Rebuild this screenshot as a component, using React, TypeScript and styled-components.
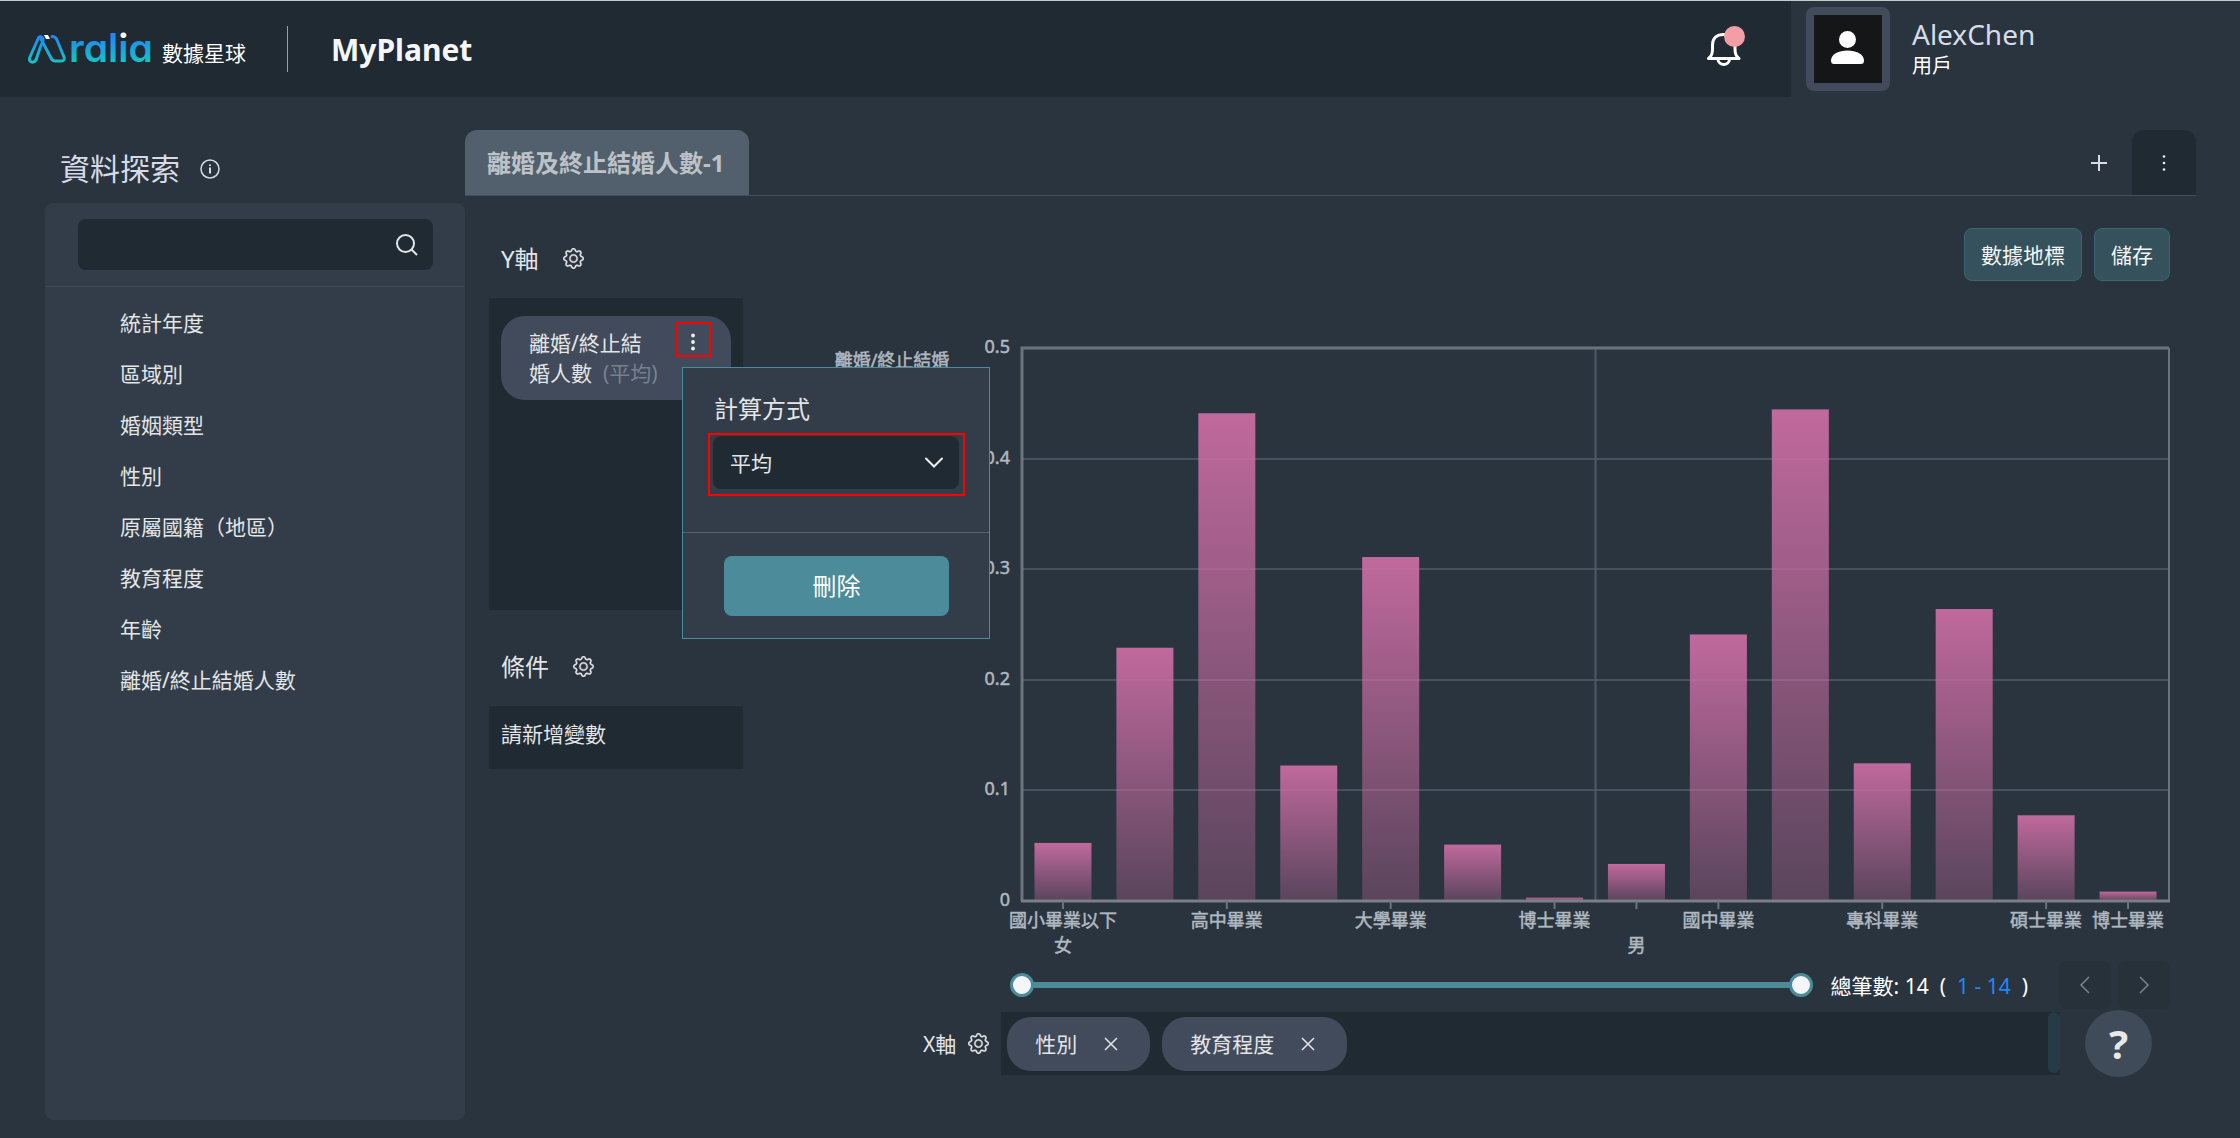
import React, { useState } from "react";
import styled, { createGlobalStyle } from "styled-components";
import { BsGear } from "react-icons/bs";

const color = {
  page: "#2a343e",
  deep: "#202a33",
  panel: "#323d49",
  chip: "#414b5c",
  line: "#434f5f",
  teal: "#4c8c9a",
  text: "#e3e5e7",
  soft: "#d7dbe8",
  mark: "#ff0000",
};

const GlobalStyle = createGlobalStyle`
  *, *::before, *::after { box-sizing: border-box; }
  body {
    margin: 0;
    background: ${color.page};
    color: ${color.text};
    font-family: "Noto Sans", "Noto Sans CJK TC", sans-serif;
    font-size: 21px;
    line-height: 30px;
  }
  button, input, select {
    font: inherit;
    color: inherit;
  }
  button { cursor: pointer; padding: 0; border: 0; background: none; }
  svg { display: block; }
`;

const Page = styled.div`
  min-height: 100vh;
  display: flex;
  flex-direction: column;
  border-top: 1px solid #c3cac9;
`;

/* header */

const Header = styled.header`
  display: flex;
  height: 96px;
`;

const Brand = styled.div`
  flex: 1;
  display: flex;
  align-items: center;
  padding: 0 43px 0 28px;
  background: ${color.deep};
`;

const BrandName = styled.span`
  margin-left: 6px;
  padding-top: 8px;
  color: #fff;
`;

const Divider = styled.span`
  width: 1px;
  height: 46px;
  margin: 0 43px 0 41px;
  background: #98a0a6;
`;

const PageTitle = styled.h1`
  flex: 1;
  margin: 0;
  padding-top: 2px;
  font-size: 30px;
  line-height: 40px;
  font-weight: 700;
  color: #f5f6fa;
`;

const BellButton = styled.button`
  display: block;
`;

const User = styled.div`
  width: 449px;
  display: flex;
  align-items: center;
  gap: 22px;
  padding-left: 15px;
`;

const Avatar = styled.div`
  width: 84px;
  height: 84px;
  border: 8px solid ${color.chip};
  border-radius: 8px;
  background: #141618;
`;

const UserName = styled.div`
  font-size: 28px;
  line-height: 34px;
  color: ${color.soft};
`;

const UserRole = styled.div`
  font-size: 20px;
  color: #fff;
`;

/* page body */

const Body = styled.div`
  flex: 1;
  display: flex;
  padding: 33px 44px 18px 45px;
`;

const Sidebar = styled.aside`
  width: 420px;
  flex: none;
  display: flex;
  flex-direction: column;
`;

const SidebarHead = styled.div`
  display: flex;
  align-items: center;
  gap: 20px;
  height: 73px;
  padding: 5px 0 0 15px;
`;

const SidebarTitle = styled.h2`
  margin: 0;
  font-size: 30px;
  line-height: 40px;
  font-weight: 400;
  color: ${color.soft};
`;

const SidebarPanel = styled.div`
  flex: 1;
  border: 1px solid ${color.panel};
  border-radius: 8px;
  background: ${color.panel};
`;

const SearchArea = styled.label`
  display: grid;
  align-items: center;
  padding: 15px 31px 16px 32px;
  border-bottom: 1px solid #3e495b;
  > * { grid-area: 1 / 1; }
  > svg { justify-self: end; margin-right: 15px; }
`;

const SearchInput = styled.input`
  width: 100%;
  height: 51px;
  padding: 0 50px 0 16px;
  border: 0;
  border-radius: 8px;
  background: ${color.deep};
  outline: none;
`;

const FieldList = styled.ul`
  margin: 0;
  padding: 11px 0 0 74px;
  list-style: none;
`;

const Field = styled.li`
  line-height: 51px;
`;

const Main = styled.main`
  flex: 1;
  min-width: 0;
`;

const TabBar = styled.div`
  display: flex;
  align-items: center;
  height: 66px;
  border-bottom: 1px solid ${color.line};
`;

const Tab = styled.button`
  height: 65px;
  padding: 0 25px 0 22px;
  border-radius: 12px 12px 0 0;
  background: #52606d;
  color: #bcc2c8;
  font-size: 24px;
  font-weight: 700;
`;

const AddTab = styled.button`
  margin: 0 17px 0 auto;
  padding: 8px;
`;

const TabMenu = styled.button`
  display: grid;
  place-items: center;
  width: 64px;
  height: 65px;
  border-radius: 12px 12px 0 0;
  background: ${color.deep};
`;

const Workspace = styled.div`
  display: flex;
  gap: 80px;
  padding: 32px 26px 0 24px;
`;

/* variable slots */

const Slots = styled.div`
  width: 254px;
  flex: none;
`;

const SlotTitle = styled.h3`
  display: flex;
  align-items: center;
  gap: 24px;
  height: 70px;
  margin: 0;
  padding: 0 0 9px 12px;
  font-size: 24px;
  font-weight: 400;
`;

const Gear = styled(BsGear)`
  stroke: currentColor;
  stroke-width: 0.3px;
`;

const YSlot = styled.div`
  position: relative;
  height: 312px;
  margin-bottom: 26px;
  padding: 18px 12px;
  background: ${color.deep};
`;

const Measure = styled.div`
  display: flex;
  align-items: flex-start;
  justify-content: space-between;
  height: 84px;
  padding: 6px 20px 0 28px;
  border-radius: 24px;
  background: ${color.chip};
`;

const MeasureName = styled.div`
  width: 134px;
  padding-top: 6px;
  font-size: 21px;
  white-space: nowrap;
`;

const Muted = styled.span`
  margin-left: 11px;
  color: #75818f;
`;

const MenuButton = styled.button`
  display: grid;
  place-items: center;
  width: 35px;
  height: 35px;
  padding: 5px 2px 0 0;
  border: 2px solid ${color.mark};
`;

const EmptySlot = styled.div`
  height: 63px;
  padding: 13px 12px 0;
  background: ${color.deep};
`;

const Popup = styled.div`
  position: absolute;
  top: 69px;
  left: 193px;
  width: 308px;
  z-index: 2;
  border: 1px solid ${color.teal};
  background: ${color.panel};
`;

const PopupTop = styled.div`
  padding: 26px 24px 36px 25px;
  border-bottom: 1px solid #56626e;
`;

const PopupLabel = styled.label`
  display: block;
  padding: 0 6px 9px;
  font-size: 24px;
`;

const SelectFrame = styled.div`
  display: grid;
  align-items: center;
  height: 63px;
  padding: 1px 4px 5px 3px;
  border: 2px solid ${color.mark};
  > * { grid-area: 1 / 1; }
  > svg { justify-self: end; margin-right: 16px; pointer-events: none; }
`;

const Select = styled.select`
  appearance: none;
  width: 100%;
  height: 53px;
  padding: 0 17px;
  border: 0;
  border-radius: 8px;
  background: ${color.deep};
`;

const PopupBottom = styled.div`
  padding: 23px 40px 22px 41px;
`;

const DeleteButton = styled.button`
  width: 100%;
  height: 60px;
  border-radius: 8px;
  background: ${color.teal};
  color: #fff;
  font-size: 24px;
`;

/* chart side */

const ChartSide = styled.div`
  flex: 1;
  min-width: 0;
`;

const Actions = styled.div`
  display: flex;
  justify-content: flex-end;
  gap: 12px;
`;

const ActionButton = styled.button`
  height: 53px;
  padding: 0 16px;
  border: 1px solid #396672;
  border-radius: 8px;
  background: #35515c;
  color: #f3f5f6;
`;

const Chart = styled.svg`
  width: 100%;
  margin-top: 40px;
  text {
    font-size: 18px;
    fill: #b0b8c0;
    stroke: #b0b8c0;
    stroke-width: 0.5px;
  }
`;

const RangeRow = styled.div`
  display: flex;
  align-items: center;
  height: 48px;
  padding-left: 187px;
`;

const Range = styled.div`
  flex: 1;
  display: grid;
  align-items: center;
  height: 24px;
  background: linear-gradient(${color.teal}, ${color.teal}) center / calc(100% - 24px) 6px no-repeat;
`;

const RangeInput = styled.input`
  grid-area: 1 / 1;
  appearance: none;
  width: 100%;
  height: 24px;
  margin: 0;
  background: none;
  pointer-events: none;
  &::-webkit-slider-thumb {
    appearance: none;
    width: 24px;
    height: 24px;
    border: 3px solid ${color.teal};
    border-radius: 50%;
    background: #f5f6fa;
    pointer-events: auto;
  }
`;

const Total = styled.div`
  margin: 2px 31px 0 18px;
  color: #fff;
  white-space: pre;
`;

const TotalRange = styled.span`
  margin: 0 11px;
  color: #1f86ff;
`;

const Pager = styled.div`
  display: flex;
  gap: 7px;
`;

const PagerButton = styled.button`
  display: grid;
  place-items: center;
  width: 52px;
  height: 48px;
  border-radius: 8px;
  background: #27313a;
`;

const XRow = styled.div`
  display: flex;
  align-items: center;
  padding: 1px 18px 0 100px;
`;

const XLabel = styled.span`
  margin-right: 12px;
`;

const XSlot = styled.div`
  flex: 1;
  display: flex;
  align-items: center;
  gap: 12px;
  height: 63px;
  margin-left: 12px;
  padding-left: 6px;
  background: ${color.deep};
`;

const Chip = styled.span`
  display: flex;
  align-items: center;
  gap: 23px;
  height: 54px;
  padding: 0 28px;
  border-radius: 24px;
  background: ${color.chip};
`;

const ChipRemove = styled.button`
  padding: 4px;
`;

const ScrollThumb = styled.span`
  align-self: flex-start;
  width: 12px;
  height: 61px;
  margin-left: auto;
  border-radius: 6px;
  background: #263b46;
`;

const HelpButton = styled.button`
  width: 67px;
  height: 67px;
  margin-left: 25px;
  border-radius: 50%;
  background: #3f4b59;
  color: #e8e8e8;
  font-size: 40px;
  line-height: 67px;
  font-weight: 700;
`;

/* icons */

const Logo = () => (
  <svg width="128" height="64" viewBox="0 -10 128 64" role="img" aria-label="Aralia">
    <defs>
      <linearGradient id="brand" gradientUnits="userSpaceOnUse" x1="0" y1="8" x2="0" y2="36">
        <stop offset="0" stopColor="#2186f0" />
        <stop offset="1" stopColor="#17c3c4" />
      </linearGradient>
      <linearGradient id="brandDot" gradientUnits="userSpaceOnUse" x1="0" y1="8" x2="0" y2="36">
        <stop offset="0.16" stopColor="#fff" />
        <stop offset="0.16" stopColor="#1f90e9" />
        <stop offset="1" stopColor="#17c3c4" />
      </linearGradient>
    </defs>
    <g fill="none" stroke="url(#brand)" strokeWidth="3" strokeLinecap="round" strokeLinejoin="round">
      <path d="M15 12C14 9 11 9 10 12L2 30C0 35 5 37 8 33L12 21L15 14" />
      <path d="M12 10L23 31C24 33 25 34 27 34H33C36 34 37 32 36 30L29 13C28 10 26 9.500 24 9.500" />
    </g>
    <path d="M16 8h4l2 4h-4z" fill="#fff" />
    <text
      x="41"
      y="35"
      fontFamily="Inter, sans-serif"
      fontSize="39"
      fontWeight="600"
      fill="url(#brand)"
      style={{ fontFeatureSettings: '"cv11" 1' }}
    >
      ral<tspan fill="url(#brandDot)">i</tspan>a
    </text>
  </svg>
);

const Bell = () => (
  <svg width="42" height="48" viewBox="0 0 42 48" fill="none" stroke="#fff" strokeWidth="3" strokeLinecap="round" strokeLinejoin="round">
    <path d="M2.500 33.500H33" />
    <path d="M3 33C6 31 6.500 28 6.500 24V20C6.500 13 11 9.500 17.500 9.500S29 13 29 20V24C29 28 29.500 31 32.500 33" />
    <path d="M12 34.500C12.500 41 23 41 23.500 34.500" />
    <circle cx="28.500" cy="11.500" r="10.500" fill="#f39ea6" stroke="none" />
  </svg>
);

const Person = () => (
  <svg width="68" height="68" viewBox="0 0 68 68" fill="#fff">
    <circle cx="33.500" cy="24.500" r="8.500" />
    <path d="M17 45.500C17 39 25 35.500 33.500 35.500S50 39 50 45.500C50 48 49 49 47 49H20C18 49 17 48 17 45.500Z" />
  </svg>
);

const Info = () => (
  <svg width="20" height="20" viewBox="0 0 20 20" fill="none" stroke={color.soft} strokeWidth="2">
    <circle cx="10" cy="10" r="9" strokeWidth="1.500" />
    <path d="M10 8.500V14.500M10 5.500V7" />
  </svg>
);

const SearchIcon = () => (
  <svg width="22" height="22" viewBox="0 0 22 22" fill="none" stroke={color.text} strokeWidth="2">
    <circle cx="9.500" cy="9.500" r="8.500" />
    <path d="M15 15L21 21" />
  </svg>
);

const Plus = () => (
  <svg width="16" height="16" viewBox="0 0 16 16" stroke={color.soft} strokeWidth="2">
    <path d="M0 8H16M8 0V16" />
  </svg>
);

const Dots = ({ r }: { r: number }) => (
  <svg width="6" height="18" viewBox="0 0 6 18" fill="#eceef1">
    <circle cx="3" cy="2.500" r={r} />
    <circle cx="3" cy="9" r={r} />
    <circle cx="3" cy="15.500" r={r} />
  </svg>
);

const ChevronDown = () => (
  <svg width="18" height="12" viewBox="0 0 18 12" fill="none" stroke="#eceef1" strokeWidth="2" strokeLinecap="round">
    <path d="M1 1.500L9 9.500L17 1.500" />
  </svg>
);

const Arrow = ({ next }: { next?: boolean }) => (
  <svg width="10" height="18" viewBox="0 0 10 18" fill="none" stroke="#7c858e" strokeWidth="1.500">
    <path d={next ? "M1 1L9 9L1 17" : "M9 1L1 9L9 17"} />
  </svg>
);

const Cross = () => (
  <svg width="14" height="14" viewBox="0 0 14 14" stroke={color.text} strokeWidth="1.500">
    <path d="M1 1L13 13M13 1L1 13" />
  </svg>
);

/* bar chart */

const values = [0.0525, 0.229, 0.441, 0.1225, 0.311, 0.051, 0.003, 0.0335, 0.241, 0.4445, 0.1245, 0.264, 0.0775, 0.0085];
const ticks = [0, 0.1, 0.2, 0.3, 0.4, 0.5];
const categoryLabels: [number, string][] = [
  [0, "國小畢業以下"],
  [2, "高中畢業"],
  [4, "大學畢業"],
  [6, "博士畢業"],
  [8, "國中畢業"],
  [10, "專科畢業"],
  [12, "碩士畢業"],
  [13, "博士畢業"],
];
const plot = { left: 199, right: 1346, top: 27, bottom: 580 };
const step = (plot.right - plot.left) / values.length;
const yOf = (v: number) => plot.bottom - ((plot.bottom - plot.top) * v) / 0.5;
const xOf = (i: number) => plot.left + step * (i + 0.5);

const BarChart = () => (
  <Chart viewBox="0 0 1347 640" role="img" aria-label="離婚/終止結婚人數">
    <defs>
      <linearGradient id="bar" x1="0" y1="0" x2="0" y2="1">
        <stop offset="0" stopColor="#c86ca2" stopOpacity="0.95" />
        <stop offset="1" stopColor="#c86ca2" stopOpacity="0.3" />
      </linearGradient>
    </defs>
    <text x="69" y="46" textAnchor="middle">離婚/終止結婚</text>
    {ticks.map((t) => (
      <text key={t} x="187" y={yOf(t) + 5} textAnchor="end">{t}</text>
    ))}
    <g stroke="#46535f" strokeWidth="2">
      {ticks.slice(1, 5).map((t) => (
        <path key={t} d={`M${plot.left} ${Math.round(yOf(t))}H${plot.right}`} />
      ))}
      <path d={`M${plot.left + 7 * step} ${plot.top}V${plot.bottom}`} stroke="#4b5a69" />
    </g>
    {values.map((v, i) => (
      <rect key={i} x={xOf(i) - 28.5} y={yOf(v)} width="57" height={plot.bottom - yOf(v)} fill="url(#bar)" />
    ))}
    <g fill="none" stroke="#6b747d">
      <path d={`M${plot.left} ${plot.bottom}V${plot.top}H${plot.right}`} strokeWidth="3" />
      <path d={`M${plot.right} ${plot.top}V${plot.bottom}`} strokeWidth="2" />
      <path d={`M${plot.left - 1} ${plot.bottom}H${plot.right + 1}`} strokeWidth="3" stroke="#7b7f89" />
      {[0, 2, 4, 6, 7, 8, 10, 12, 13].map((i) => (
        <path key={i} d={`M${xOf(i)} ${plot.bottom}v8`} strokeWidth="2" />
      ))}
    </g>
    {categoryLabels.map(([i, label]) => (
      <text key={i} x={xOf(i)} y="606" textAnchor="middle">{label}</text>
    ))}
    <text x={xOf(0)} y="631" textAnchor="middle">女</text>
    <text x={xOf(7)} y="631" textAnchor="middle">男</text>
  </Chart>
);

const fields = ["統計年度", "區域別", "婚姻類型", "性別", "原屬國籍（地區）", "教育程度", "年齡", "離婚/終止結婚人數"];

export default function App() {
  const [from, setFrom] = useState(1);
  const [to, setTo] = useState(14);

  return (
    <Page lang="zh-Hant">
      <GlobalStyle />
      <Header>
        <Brand>
          <Logo />
          <BrandName>數據星球</BrandName>
          <Divider />
          <PageTitle>MyPlanet</PageTitle>
          <BellButton aria-label="通知"><Bell /></BellButton>
        </Brand>
        <User>
          <Avatar><Person /></Avatar>
          <div>
            <UserName>AlexChen</UserName>
            <UserRole>用戶</UserRole>
          </div>
        </User>
      </Header>

      <Body>
        <Sidebar>
          <SidebarHead>
            <SidebarTitle>資料探索</SidebarTitle>
            <Info />
          </SidebarHead>
          <SidebarPanel>
            <SearchArea>
              <SearchInput type="text" aria-label="搜尋" />
              <SearchIcon />
            </SearchArea>
            <FieldList>
              {fields.map((f) => <Field key={f}>{f}</Field>)}
            </FieldList>
          </SidebarPanel>
        </Sidebar>

        <Main>
          <TabBar>
            <Tab>離婚及終止結婚人數-1</Tab>
            <AddTab aria-label="新增"><Plus /></AddTab>
            <TabMenu aria-label="選單"><Dots r={1.3} /></TabMenu>
          </TabBar>

          <Workspace>
            <Slots>
              <SlotTitle>Y軸 <Gear size={21} /></SlotTitle>
              <YSlot>
                <Measure>
                  <MeasureName>離婚/終止結<br />婚人數<Muted>(平均)</Muted></MeasureName>
                  <MenuButton aria-label="選項"><Dots r={1.9} /></MenuButton>
                </Measure>
                <Popup>
                  <PopupTop>
                    <PopupLabel htmlFor="method">計算方式</PopupLabel>
                    <SelectFrame>
                      <Select id="method" defaultValue="平均">
                        <option>平均</option>
                      </Select>
                      <ChevronDown />
                    </SelectFrame>
                  </PopupTop>
                  <PopupBottom>
                    <DeleteButton>刪除</DeleteButton>
                  </PopupBottom>
                </Popup>
              </YSlot>
              <SlotTitle>條件 <Gear size={21} /></SlotTitle>
              <EmptySlot>請新增變數</EmptySlot>
            </Slots>

            <ChartSide>
              <Actions>
                <ActionButton>數據地標</ActionButton>
                <ActionButton>儲存</ActionButton>
              </Actions>
              <BarChart />
              <RangeRow>
                <Range>
                  <RangeInput type="range" aria-label="起始" min={1} max={14} value={from} onChange={(e) => setFrom(Math.min(+e.target.value, to))} />
                  <RangeInput type="range" aria-label="結束" min={1} max={14} value={to} onChange={(e) => setTo(Math.max(+e.target.value, from))} />
                </Range>
                <Total>總筆數: 14{"  "}(<TotalRange>{from} - {to}</TotalRange>)</Total>
                <Pager>
                  <PagerButton aria-label="上一頁"><Arrow /></PagerButton>
                  <PagerButton aria-label="下一頁"><Arrow next /></PagerButton>
                </Pager>
              </RangeRow>
              <XRow>
                <XLabel>X軸</XLabel>
                <Gear size={21} />
                <XSlot>
                  {["性別", "教育程度"].map((v) => (
                    <Chip key={v}>
                      {v}
                      <ChipRemove aria-label={`移除${v}`}><Cross /></ChipRemove>
                    </Chip>
                  ))}
                  <ScrollThumb />
                </XSlot>
                <HelpButton aria-label="說明">?</HelpButton>
              </XRow>
            </ChartSide>
          </Workspace>
        </Main>
      </Body>
    </Page>
  );
}
